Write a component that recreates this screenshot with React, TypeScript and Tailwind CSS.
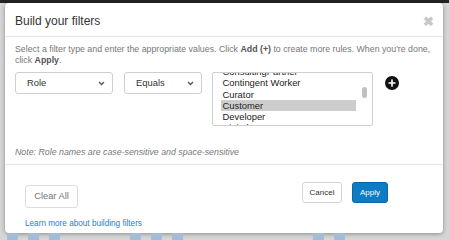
import { Plus } from 'lucide-react';

const roleOptions = [
  'ConsultingPartner',
  'Contingent Worker',
  'Curator',
  'Customer',
  'Developer',
  'Digital UX Partner',
];

function SelectBox({ label, width }: { label: string; width: string }) {
  return (
    <div
      className={[
        'flex h-[22px] items-center justify-between rounded-[3px] border border-[#cfcfcf] bg-white pl-[11px] pr-[7px] text-[9.4px] text-[#333]',
        width,
      ].join(' ')}
    >
      <span>{label}</span>
      <svg width="7" height="5" viewBox="0 0 7 5" aria-hidden="true">
        <path d="M1 1l2.5 2.5L6 1" fill="none" stroke="#555" strokeWidth="1.3" />
      </svg>
    </div>
  );
}

export default function App() {
  return (
    <div
      className="relative flex h-[240px] w-[449px] flex-col overflow-hidden bg-[#d6d6d6]"
      style={{ fontFamily: '"Liberation Sans", Arial, sans-serif' }}
    >
      <div className="h-[3px] bg-[#222]" />

      <div className="flex pl-[5px]">
        <div className="flex h-[230px] w-[438px] flex-col rounded-[4px] bg-white shadow-[0_1px_4px_rgba(0,0,0,0.35)]">
          {/* header */}
          <div className="flex h-[34px] items-center justify-between border-b border-[#e5e5e5] pl-[10px] pr-[9px] pt-[3px]">
            <h2 className="text-[12px] text-[#333]">Build your filters</h2>
            <span className="text-[13px] font-bold leading-none text-[#c8c8c8]">✖</span>
          </div>

          {/* body */}
          <div className="px-[10px] pt-[7px]">
            <p className="text-[8.8px] leading-[11px] text-[#777]">
              Select a filter type and enter the appropriate values. Click{' '}
              <b className="text-[#555]">Add (+)</b> to create more rules. When you're done,
              click <b className="text-[#555]">Apply</b>.
            </p>

            <div className="mt-[6px] flex items-start">
              <SelectBox label="Role" width="w-[98px]" />
              <div className="w-[11px]" />
              <SelectBox label="Equals" width="w-[78px]" />
              <div className="w-[10px]" />

              <div className="flex h-[54px] w-[161px] overflow-hidden rounded-[2px] border border-[#cfcfcf] bg-white">
                <div className="w-[143px] overflow-hidden pl-[8px]">
                  <div className="mt-[-7px] text-[9.4px] leading-[11.3px] text-[#222]">
                    {roleOptions.map((option) => (
                      <div
                        key={option}
                        className={
                          option === 'Customer'
                            ? 'bg-[#cdcdcd] pl-[1.5px]'
                            : 'pl-[1.5px]'
                        }
                      >
                        {option}
                      </div>
                    ))}
                  </div>
                </div>
                <div className="flex flex-1 justify-center pt-[14px]">
                  <div className="h-[11px] w-[5px] rounded-full bg-[#c1c1c1]" />
                </div>
              </div>

              <div className="ml-[12px] mt-[4px] flex h-[14px] w-[14px] items-center justify-center rounded-full bg-[#111]">
                <Plus className="h-[10px] w-[10px] text-white" strokeWidth={4} />
              </div>
            </div>

            <p className="mt-[21px] text-[8.8px] italic leading-[11px] text-[#777]">
              Note: Role names are case-sensitive and space-sensitive
            </p>
          </div>

          <div className="mt-[6px] border-t border-[#e5e5e5]" />

          {/* footer */}
          <div className="flex items-start justify-between pl-[20px] pr-[55px] pt-[17px]">
            <div>
              <button
                type="button"
                className="h-[23px] w-[53px] rounded-[3px] border border-[#ddd] bg-white text-[9.3px] text-[#777]"
              >
                Clear All
              </button>
              <a className="mt-[10px] block text-[8.2px] text-[#2a7dcc]">
                Learn more about building filters
              </a>
            </div>
            <div className="flex gap-[10px]">
              <button
                type="button"
                className="h-[21px] w-[40px] rounded-[3px] border border-[#d4d4d4] bg-white text-[8px] text-[#333]"
              >
                Cancel
              </button>
              <button
                type="button"
                className="h-[21px] w-[36px] rounded-[3px] border border-[#0b67a8] bg-[#0e7bc5] text-[8px] text-white"
              >
                Apply
              </button>
            </div>
          </div>
        </div>
      </div>

      <div className="flex gap-[10px] pl-[7px] pt-[0px]">
        <div className="h-[7px] w-[11px] bg-[#a5bcd7]" />
        <div className="h-[7px] w-[11px] bg-[#a5bcd7]" />
        <div className="h-[7px] w-[11px] bg-[#a5bcd7]" />
        <div className="ml-[60px] h-[7px] w-[11px] bg-[#a5bcd7]" />
        <div className="h-[7px] w-[11px] bg-[#a5bcd7]" />
        <div className="h-[7px] w-[11px] bg-[#a5bcd7]" />
        <div className="ml-[120px] h-[7px] w-[11px] bg-[#a5bcd7]" />
        <div className="h-[7px] w-[11px] bg-[#a5bcd7]" />
      </div>
    </div>
  );
}
